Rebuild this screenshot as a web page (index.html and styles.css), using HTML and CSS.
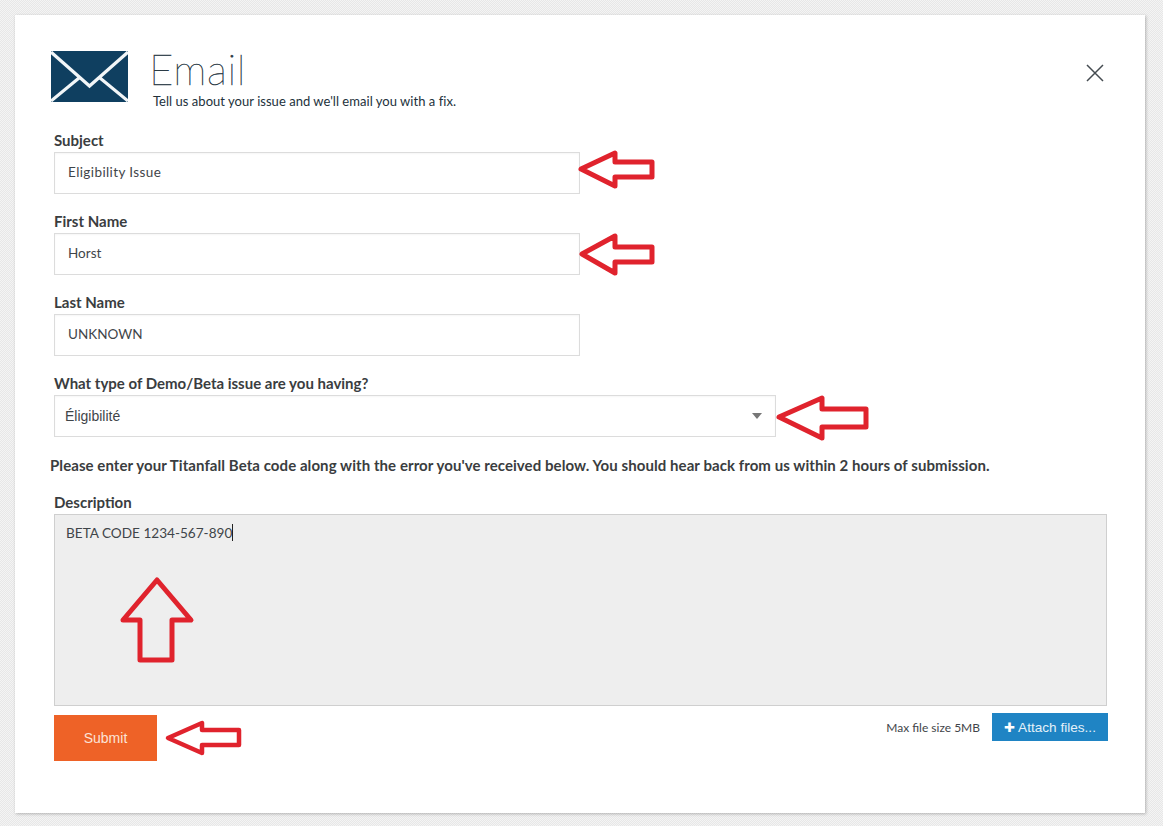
FILE: index.html
```html
<!DOCTYPE html>
<html lang="en">
<head>
    <meta charset="UTF-8">
    <title>Email</title>
    <link rel="stylesheet" href="styles.css">
</head>
<body>
<div class="card">
    <div class="header">
        <svg class="mail-icon" width="77" height="51" viewBox="0 0 77 51">
            <rect width="77" height="51" fill="#0f3f60"/>
            <path d="M0 1 L38.5 35 L77 1 M0 50 L28 27 M77 50 L49 27" fill="none" stroke="#f2f6f8" stroke-width="3.2"/>
        </svg>
        <div class="heading">
            <h1>Email</h1>
            <p>Tell us about your issue and we'll email you with a fix.</p>
        </div>
        <svg class="close" width="18" height="18" viewBox="0 0 18 18">
            <path d="M1 1 L17 17 M17 1 L1 17" fill="none" stroke="#444b50" stroke-width="1.5"/>
        </svg>
    </div>

    <label class="field">
        <span class="label">Subject</span>
        <span class="input wide">Eligibility Issue</span>
    </label>
    <label class="field">
        <span class="label">First Name</span>
        <span class="input">Horst</span>
    </label>
    <label class="field">
        <span class="label">Last Name</span>
        <span class="input">UNKNOWN</span>
    </label>
    <label class="field">
        <span class="label">What type of Demo/Beta issue are you having?</span>
        <span class="input select">Éligibilité<span class="caret"></span></span>
    </label>

    <p class="note">Please enter your Titanfall Beta code along with the error you've received below. You should hear back from us within 2 hours of submission.</p>

    <div class="field description">
        <span class="label">Description</span>
        <div class="textarea">BETA CODE 1234-567-890<span class="cursor"></span></div>
    </div>

    <div class="actions">
        <button class="submit" type="button">Submit</button>
        <div class="attach">
            <span class="max-size">Max file size 5MB</span>
            <button class="attach-btn" type="button"><span class="plus">✚</span> Attach files...</button>
        </div>
    </div>
</div>

<!-- red arrows drawn on top of the screenshot -->
<svg class="arrow" style="left:578px;top:150px" width="78" height="40" viewBox="0 0 78 40"><path d="M3 19 L37 3 L37 12 L74 12 L74 27 L37 27 L37 36 Z"/></svg>
<svg class="arrow" style="left:578px;top:233px" width="78" height="44" viewBox="0 0 78 44"><path d="M4 21 L37 3 L37 14 L74 14 L74 29 L37 29 L37 40 Z"/></svg>
<svg class="arrow" style="left:775px;top:394px" width="96" height="48" viewBox="0 0 96 48"><path d="M4 23 L47 4 L47 15 L91 15 L91 33 L47 33 L47 44 Z"/></svg>
<svg class="arrow" style="left:120px;top:577px" width="74" height="87" viewBox="0 0 74 87"><path d="M37 3 L71 43 L52 43 L52 83 L20 83 L20 43 L3 43 Z"/></svg>
<svg class="arrow thin" style="left:165px;top:720px" width="78" height="36" viewBox="0 0 78 36"><path d="M3 18 L37 3 L37 10 L74 10 L74 25 L37 25 L37 33 Z"/></svg>
</body>
</html>
```

FILE: styles.css
```css
html, body {
    margin: 0;
    height: 100%;
}
body {
    position: relative;
    height: 826px;
    overflow: hidden;
    box-sizing: border-box;
    padding: 15px 18px 13px 15px;
    font-family: Lato, "Open Sans", sans-serif;
    font-size: 14px;
    color: #3f4549;
    background: repeating-conic-gradient(#e7e7e7 0 25%, #f4f4f4 0 50%) 0 0 / 2px 2px;
}
.card {
    height: 798px;
    box-sizing: border-box;
    padding: 36px 37px 0 39px;
    background: #fff;
    box-shadow: 1px 1px 3px rgba(0, 0, 0, .25);
}
.header {
    display: flex;
    height: 82px;
    margin-left: -3px;
}
.mail-icon {
    flex: none;
}
.heading {
    margin-left: 23px;
    flex: 1;
}
h1 {
    margin: -2px 0 0 -2px;
    font-size: 42px;
    line-height: 40px;
    font-weight: 100;
    color: #2b3a45;
    -webkit-text-stroke: .4px #2b3a45;
    letter-spacing: .6px;
}
.heading p {
    margin: 4px 0 0 2px;
    font-size: 13px;
    line-height: 16px;
    letter-spacing: .03px;
    color: #22313b;
}
.close {
    margin: 13px 4px 0 0;
}
.field {
    display: block;
    margin-bottom: 20px;
}
.label {
    display: block;
    padding-bottom: 4px;
    font-weight: 700;
    font-size: 15px;
    line-height: 15px;
    color: #3a3d40;
}
.input {
    display: block;
    position: relative;
    box-sizing: border-box;
    width: 526px;
    height: 42px;
    padding: 0 13px;
    line-height: 39px;
    font-size: 13.5px;
    border: 1px solid #dcdcdc;
    box-shadow: inset 0 1px 2px rgba(0, 0, 0, .04);
}
.wide {
    letter-spacing: .4px;
}
.select {
    width: 722px;
    font-family: "Liberation Sans", Arial, sans-serif;
    font-size: 14px;
    line-height: 40px;
    padding: 0 10px;
}
.caret {
    position: absolute;
    right: 13px;
    top: 17px;
    border-left: 5px solid transparent;
    border-right: 5px solid transparent;
    border-top: 6px solid #777;
}
.note {
    margin: 20px 0 0 -4px;
    font-weight: 700;
    font-size: 15px;
    line-height: 17px;
    letter-spacing: .07px;
    color: #3a3d40;
}
.description {
    margin: 21px 0 0;
}
.textarea {
    box-sizing: border-box;
    width: 1053px;
    height: 192px;
    padding: 9px 11px;
    font-size: 13.6px;
    line-height: 18px;
    background: #eee;
    border: 1px solid #cfcfcf;
}
.cursor {
    display: inline-block;
    width: 1px;
    height: 17px;
    vertical-align: top;
    background: #222;
}
.actions {
    display: flex;
    justify-content: space-between;
    align-items: flex-start;
    width: 1054px;
    margin-top: 7px;
}
.submit {
    width: 103px;
    height: 46px;
    margin-top: 2px;
    border: 0;
    padding: 0;
    font-family: "Liberation Sans", Arial, sans-serif;
    font-size: 14px;
    color: #fbe3d6;
    background: #ee6227;
}
.attach {
    display: flex;
    align-items: center;
    gap: 12px;
}
.max-size {
    font-size: 12px;
    color: #3f4549;
}
.attach-btn {
    width: 116px;
    height: 28px;
    border: 0;
    padding: 0;
    font-family: "Liberation Sans", Arial, sans-serif;
    font-size: 13.6px;
    color: #e4f1f9;
    background: #1f84c4;
    white-space: nowrap;
}
.plus {
    color: #fff;
    font-size: 13px;
}
.arrow {
    position: absolute;
    overflow: visible;
}
.arrow path {
    fill: none;
    stroke: #e0232d;
    stroke-width: 5;
    stroke-linejoin: round;
}
.arrow.thin path {
    stroke-width: 4.5;
}
```
